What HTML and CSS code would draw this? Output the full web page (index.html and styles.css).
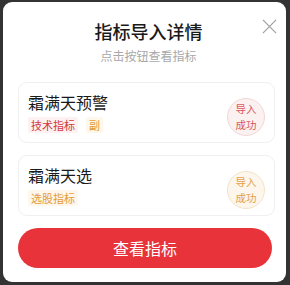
FILE: index.html
```html
<!DOCTYPE html>
<html lang="zh">
<head>
<meta charset="utf-8">
<link rel="stylesheet" href="styles.css">
</head>
<body>
<div class="panel">
  <div class="header">
    <div class="title">指标导入详情</div>
    <div class="subtitle">点击按钮查看指标</div>
    <svg class="close" width="16" height="16" viewBox="0 0 16 16"><path d="M1 1L15 15M15 1L1 15" stroke="#a0a0a0" stroke-width="1.3" fill="none"/></svg>
  </div>
  <div class="card">
    <div class="info">
      <div class="name">霜满天预警</div>
      <div class="tags">
        <span class="tag red">技术指标</span>
        <span class="tag orange">副</span>
      </div>
    </div>
    <div class="stamp stamp-red"><span>导入</span><span>成功</span></div>
  </div>
  <div class="card card-second">
    <div class="info">
      <div class="name">霜满天选</div>
      <div class="tags">
        <span class="tag orange">选股指标</span>
      </div>
    </div>
    <div class="stamp stamp-orange"><span>导入</span><span>成功</span></div>
  </div>
  <button class="btn">查看指标</button>
</div>
</body>
</html>
```
FILE: styles.css
```css
* { box-sizing: border-box; }
html, body { margin: 0; padding: 0; }
body {
  width: 290px;
  height: 285px;
  background: #333;
  font-family: "Noto Sans CJK SC", "Noto Sans", sans-serif;
  padding: 2px 4px 3px 3px;
}
.panel {
  background: #fff;
  border-radius: 9px;
  height: 280px;
  padding: 0 11px 0 15px;
  display: flex;
  flex-direction: column;
}
.header {
  position: relative;
  height: 80px;
  display: flex;
  flex-direction: column;
  align-items: center;
  padding-top: 17px;
  margin-left: 4px;
}
.title {
  font-size: 18px;
  line-height: 24px;
  font-weight: 500;
  color: #1a1a1a;
}
.subtitle {
  font-size: 12px;
  line-height: 16px;
  color: #a8a8a8;
  margin-top: 5px;
}
.close {
  position: absolute;
  right: -2px;
  top: 17px;
  width: 15px;
  height: 15px;
}
.card {
  border: 1px solid #f0f0f0;
  border-radius: 9px;
  height: 61px;
  display: flex;
  align-items: center;
  justify-content: space-between;
  padding: 0 9px 0 9px;
  margin-bottom: 12px;
}
.info {
  display: flex;
  flex-direction: column;
  margin-top: -2px;
}
.name {
  font-size: 16px;
  line-height: 22px;
  color: #1a1a1a;
}
.tags {
  display: flex;
  gap: 8px;
  margin-top: 4px;
}
.tag {
  font-size: 11px;
  line-height: 16px;
  padding: 0 3px;
  border-radius: 2px;
}
.tag.red { color: #d2373c; background: #fdf1f1; }
.tag.orange { color: #e39a3a; background: #fef7ec; }
.stamp {
  width: 38px;
  height: 38px;
  border-radius: 50%;
  font-size: 10.5px;
  line-height: 15.5px;
  text-align: center;
  display: flex;
  flex-direction: column;
  align-items: center;
  justify-content: center;
  margin-top: 8px;
}
.stamp-red { color: #d9585c; background: #fcf1f1; border: 1px solid #f3d7d7; }
.stamp-orange { color: #e3a04d; background: #fdf6ec; border: 1px solid #f4e2c8; }
.btn {
  margin-top: 0;
  height: 40px;
  width: 254px;
  border: none;
  border-radius: 20px;
  background: #e8333a;
  color: #fff;
  font-family: inherit;
  font-size: 16px;
  padding: 0;
}
```
